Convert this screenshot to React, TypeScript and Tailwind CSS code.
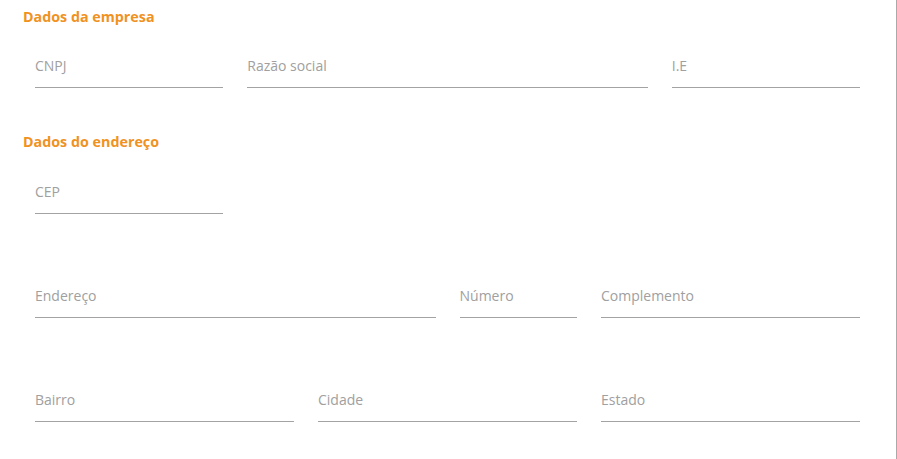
import React from 'react'

type Field = { label: string; span: string }

const empresa: Field[] = [
  { label: 'CNPJ', span: 'col-span-3' },
  { label: 'Razão social', span: 'col-span-6' },
  { label: 'I.E', span: 'col-span-3' },
]

const endereco: Field[][] = [
  [{ label: 'CEP', span: 'col-span-3' }],
  [
    { label: 'Endereço', span: 'col-span-6' },
    { label: 'Número', span: 'col-span-2' },
    { label: 'Complemento', span: 'col-span-4' },
  ],
  [
    { label: 'Bairro', span: 'col-span-4' },
    { label: 'Cidade', span: 'col-span-4' },
    { label: 'Estado', span: 'col-span-4' },
  ],
]

function SectionTitle({ children, className }: { children: React.ReactNode; className?: string }) {
  return (
    <h2 className={`text-[14.3px] leading-[18px] font-bold text-[#f0921f] ${className ?? ''}`}>
      {children}
    </h2>
  )
}

function Row({ fields, className }: { fields: Field[]; className?: string }) {
  return (
    <div className={`grid grid-cols-12 ${className ?? ''}`}>
      {fields.map((f) => (
        <div key={f.label} className={`${f.span} px-3`}>
          <div className="border-b border-[#a3a3a3] pb-[11px]">
            <span className="block text-[14px] leading-5 text-[#a0a0a0]">{f.label}</span>
          </div>
        </div>
      ))}
    </div>
  )
}

export default function App() {
  return (
    <div className="h-[459px] w-[897px] bg-white" style={{ fontFamily: '"Open Sans", "Noto Sans", sans-serif' }}>
      <div className="h-full border-r border-[#aaaaaa] pl-[23px] pr-[24px] pt-[8px]">
        <SectionTitle>Dados da empresa</SectionTitle>
        <Row fields={empresa} className="mt-[30px]" />

        <SectionTitle className="mt-[45px]">Dados do endereço</SectionTitle>
        <Row fields={endereco[0]} className="mt-[31px]" />
        <Row fields={endereco[1]} className="mt-[72px]" />
        <Row fields={endereco[2]} className="mt-[72px]" />
      </div>
    </div>
  )
}
